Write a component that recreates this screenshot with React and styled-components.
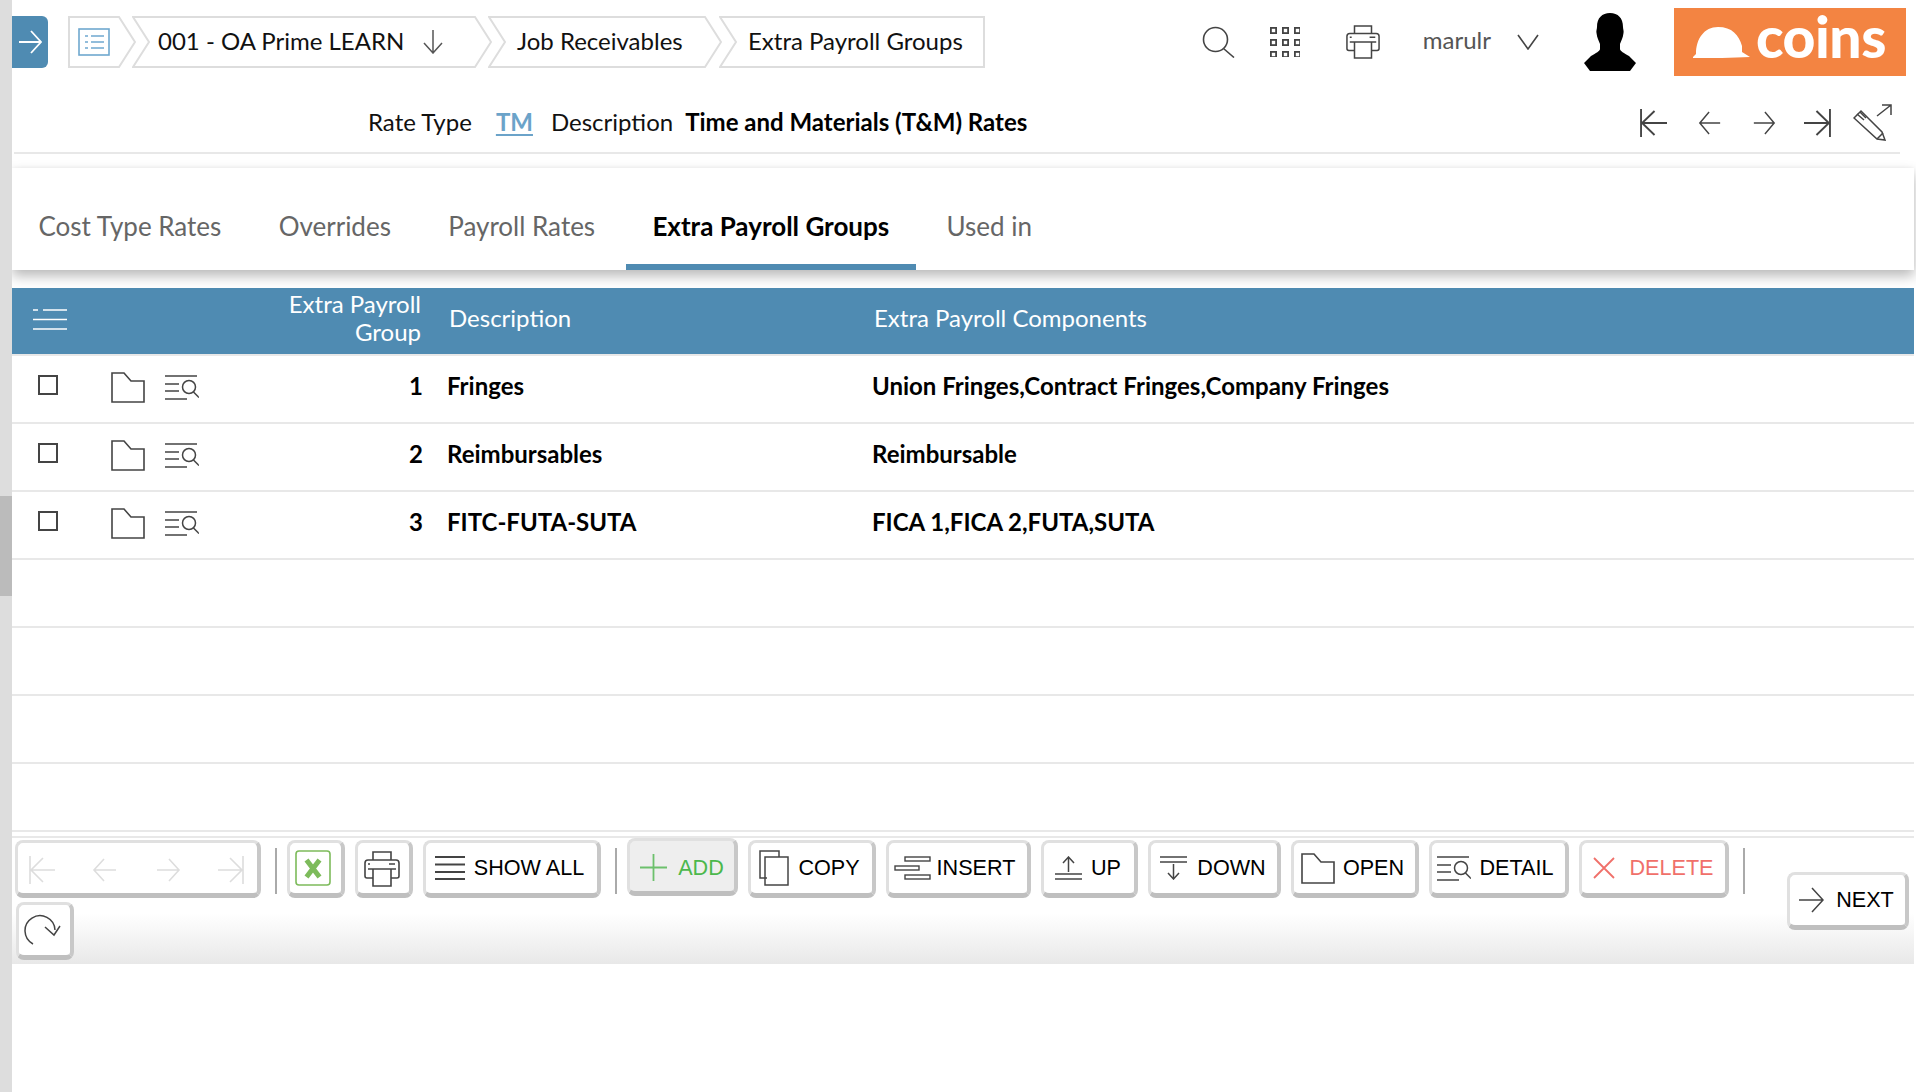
import React from "react";
import styled, { createGlobalStyle } from "styled-components";

const Global = createGlobalStyle`
  html, body { margin: 0; padding: 0; background: #fff; overflow: hidden; }
  body { font-family: Lato, "Noto Sans", sans-serif; color: #000; }
  * { box-sizing: border-box; }
`;

const Page = styled.div`display: flex; width: 1916px; height: 1092px; background: #fff;`;
const Rail = styled.div`
  position: relative; z-index: 2; width: 12px; flex: none; background: #ddd;
  &::after { content: ""; position: absolute; left: 0; top: 496px; width: 12px; height: 100px; background: #bbb; }
`;
const Main = styled.div`flex: 1; min-width: 0; display: flex; flex-direction: column;`;

const TopBar = styled.header`display: flex; align-items: center; height: 84px; padding-right: 10px;`;
const MenuButton = styled.button`
  width: 36px; height: 52px; border: 0; padding: 0; background: #4f8bb2; border-radius: 0 6px 6px 0;
  display: flex; align-items: center; justify-content: center; margin-right: 20px;
`;
const Crumbs = styled.nav`display: flex; align-items: center;`;
const CrumbBox = styled.div`
  position: relative; height: 52px; width: ${p => p.$w}px; margin-left: ${p => p.$ml}px;
  padding-left: ${p => p.$pl}px; padding-bottom: 3px; display: flex; align-items: center; gap: 18px;
  font-size: 24px; color: #111; white-space: nowrap;
  & > span, & > svg.ic { position: relative; }
  & > svg.ic { top: 1px; }
`;
const CrumbOutline = styled.svg`position: absolute; left: 0; top: 0;`;
const TopTools = styled.div`display: flex; align-items: center; margin-left: auto;`;
const User = styled.span`font-size: 24px; color: #555; margin-left: 43px; margin-right: 26px; position: relative; top: -3px;`;
const Logo = styled.div`
  width: 232px; height: 68px; background: #f38442; margin-left: 38px; padding-left: 18px;
  display: flex; align-items: center; gap: 6px; color: #fff; font-size: 57px; font-weight: 900; line-height: 1;
  span { position: relative; top: -6px; letter-spacing: -0.5px; }
`;
const ToolIcon = styled.span`display: flex; margin-left: ${p => p.$ml || 0}px;`;

const InfoRow = styled.div`
  display: flex; align-items: center; height: 70px; padding: 6px 8px 0 354px; margin: 0 16px 0 2px;
  border-bottom: 2px solid #e8e8e8; font-size: 24px; color: #111;
`;
const InfoLink = styled.span`color: #6ba3c9; font-weight: 700; text-decoration: underline; text-underline-offset: 3px; margin-left: 24px; margin-right: 18px;`;
const InfoValue = styled.span`font-weight: 700; color: #000; margin-left: 12px;`;
const RecNav = styled.div`display: flex; align-items: center; margin-left: auto; padding-top: 3px;`;
const RecIcon = styled.span`display: flex; margin-left: ${p => p.$ml}px;`;

const Tabs = styled.div`
  display: flex; height: 102px; margin: 14px 2px 0 0; background: #fff; gap: 4.3px;
  box-shadow: 0 6px 12px rgba(0,0,0,.28), 0 -1px 3px rgba(0,0,0,.03); position: relative;
`;
const Tab = styled.div`
  display: flex; align-items: center; padding: 19px 26.5px 0;
  font-size: 26px; font-weight: ${p => (p.$active ? 700 : 400)}; color: ${p => (p.$active ? "#000" : "#666")};
  border-bottom: 6px solid ${p => (p.$active ? "#4f8bb2" : "transparent")};
`;

const Cols = "188px 234px 425px 1fr";
const Table = styled.div`margin: 18px 2px 0 0;`;
const HeadRow = styled.div`
  display: grid; grid-template-columns: ${Cols}; align-items: center; height: 68px;
  background: #4f8bb2; border-bottom: 2px solid #e8e8e8; color: #fff; font-size: 24px; line-height: 28px;
`;
const HeadMenu = styled.div`display: flex; padding: 0 0 4px 21px;`;
const HeadNum = styled.div`text-align: right; padding: 0 13px 6px 0;`;
const HeadText = styled.div`padding-left: 15px; padding-bottom: 6px;`;
const Row = styled.div`
  display: grid; grid-template-columns: ${Cols}; align-items: center; height: 68px; padding-bottom: 8px;
  border-bottom: 2px solid #e8e8e8; font-size: 24px; font-weight: 700; color: #000;
`;
const RowTools = styled.div`display: flex; align-items: center; padding-left: 26px; position: relative; top: 1px;`;
const Check = styled.span`width: 20px; height: 20px; border: 2px solid #444; flex: none; margin-right: 53px; position: relative; top: -1px;`;
const RowIcon = styled.span`display: flex; margin-right: 20px; position: relative; top: 1px;`;
const Num = styled.div`text-align: right; padding-right: 11px;`;
const Cell = styled.div`padding-left: 13px; white-space: nowrap;`;

const Footer = styled.footer`
  display: flex; height: 128px; margin-top: 4px; margin-right: 2px; border-top: 2px solid #e8e8e8;
  background: linear-gradient(#fff 0, #fff 60%, #e8e8e8 100%);
`;
const Buttons = styled.div`
  flex: 1; display: flex; flex-wrap: wrap; align-content: flex-start; gap: 4px 10px; padding: 2px 0 0 3px;
`;
const Btn = styled.div`
  width: ${p => p.$w}px; height: 58px; flex: none; display: flex; align-items: center; justify-content: center;
  gap: ${p => p.$gap ?? 9}px; padding: ${p => p.$pad || "0 4px 0 0"};
  border: 3px solid #e0e0e0; border-bottom: 5px solid #bfbfbf; border-right-width: 4px; border-right-color: #c8c8c8; border-radius: 8px;
  background: ${p => (p.$pressed ? "#eee" : "#fff")};
  transform: ${p => (p.$pressed ? "translateY(-2px)" : "none")};
  font: 21.6px "Liberation Sans", Arial, sans-serif; color: ${p => p.$color || "#000"};
  white-space: nowrap;
`;
const PagerBtn = styled(Btn)`justify-content: flex-start; padding: 3px 0 0 11px; gap: 37px;`;
const RefreshBtn = styled(Btn)`margin-left: 1px;`;
const Sep = styled.span`width: 2px; height: 46px; margin: 8px 0 0 4px; background: #aaa; flex: none;`;
const NextWrap = styled.div`display: flex; align-items: center; padding-right: 5px;`;

const S = ({ w, h, vw, vh, color = "#444", sw = 1.6, children, ...rest }) => (
  <svg width={w} height={h} viewBox={`0 0 ${vw ?? w} ${vh ?? h}`} fill="none" stroke={color} strokeWidth={sw} {...rest}>{children}</svg>
);

const arrows = {
  first: "M1 0V28M26 14H2M14 2L2 14L14 26",
  prev: "M24 14H2M12 3L2 14L12 25",
  next: "M2 14H24M14 3L24 14L14 25",
  last: "M25 0V28M0 14H24M12 2L24 14L12 26",
};
const Arrow = ({ d, color, w = 26, sw = 1.6 }) => (
  <S w={w} h={28} vw={26} vh={28} color={color} sw={sw} preserveAspectRatio="none"><path d={arrows[d]} /></S>
);

const Folder = ({ w = 34, h = 31 }) => (
  <S w={w} h={h} vw={34} vh={31} sw={1.6}><path d="M1 1H13L20 9H33V30H1Z" /></S>
);
const Detail = ({ w = 34, h = 25 }) => (
  <S w={w} h={h} vw={34} vh={25} sw={1.5}>
    <path d="M0 1H32M0 9H14M0 16H14M0 24H22" />
    <circle cx="24" cy="12" r="6.5" />
    <path d="M28.5 17L34 22.5" />
  </S>
);
const Printer = ({ w = 36, h = 36 }) => (
  <S w={w} h={h} vw={36} vh={36} sw={1.6}>
    <path d="M9 9V1H27V9" />
    <path d="M9 27H3Q1 27 1 25V12Q1 9 4 9H32Q35 9 35 12V25Q35 27 33 27H27" />
    <path d="M4 18H32M9 18V35H27V18" />
    <path d="M4 13H6M25 13H31" />
  </S>
);
const Lines = () => (
  <S w={30} h={24} sw={2}><path d="M0 1H30M0 8.5H30M0 16H30M0 23H30" /></S>
);

const Crumb = ({ w, ml = 0, pl, first, last, children }) => {
  const d = 16, h = 52, t = 1, b = h - 1;
  const pts = [
    `1,${t}`,
    last ? `${w - 1},${t}` : `${w - d - 1},${t}`,
    ...(last ? [] : [`${w - 1},${h / 2}`]),
    last ? `${w - 1},${b}` : `${w - d - 1},${b}`,
    `1,${b}`,
    ...(first ? [] : [`${d + 1},${h / 2}`]),
  ].join(" ");
  return (
    <CrumbBox $w={w} $ml={ml} $pl={pl}>
      <CrumbOutline width={w} height={h}><polygon points={pts} fill="#fff" stroke="#ddd" strokeWidth="2" /></CrumbOutline>
      {children}
    </CrumbBox>
  );
};

const rows = [
  ["1", "Fringes", "Union Fringes,Contract Fringes,Company Fringes"],
  ["2", "Reimbursables", "Reimbursable"],
  ["3", "FITC-FUTA-SUTA", "FICA 1,FICA 2,FUTA,SUTA"],
  [], [], [], [],
];

export default function App() {
  return (
    <>
      <Global />
      <Page>
        <Rail />
        <Main>
          <TopBar>
            <MenuButton aria-label="menu">
              <S w={24} h={28} color="#fff" sw={1.8}><path d="M1 14H23M13 3L23 14L13 25" /></S>
            </MenuButton>
            <Crumbs>
              <Crumb w={68} pl={10} first>
                <S className="ic" w={32} h={28} color="#6fa8cf" sw={1.6}>
                  <rect x="1" y="1" width="30" height="26" />
                  <path d="M7 8H10M13 8H26M7 14H10M13 14H26M7 20H10M13 20H26" />
                </S>
              </Crumb>
              <Crumb w={360} ml={-4} pl={26}>
                <span>001 - OA Prime LEARN</span>
                <S className="ic" w={22} h={24} color="#555" sw={1.5}><path d="M11 0V23M2 13L11 23L20 13" /></S>
              </Crumb>
              <Crumb w={234} ml={-4} pl={29}><span>Job Receivables</span></Crumb>
              <Crumb w={266} ml={-3} pl={29} last><span>Extra Payroll Groups</span></Crumb>
            </Crumbs>
            <TopTools>
              <ToolIcon>
                <S w={33} h={32} sw={1.6}><circle cx="13.5" cy="13.5" r="12" /><path d="M21.5 22.5L32 31.5" /></S>
              </ToolIcon>
              <ToolIcon $ml={35}>
                <S w={30} h={30} sw={1.8}>
                  {[0, 12, 24].map(y => [0, 12, 24].map(x => <rect key={`${x}-${y}`} x={x + .9} y={y + .9} width="5.2" height="5.2" />))}
                </S>
              </ToolIcon>
              <ToolIcon $ml={46}><Printer w={34} h={34} /></ToolIcon>
              <User>marulr</User>
              <ToolIcon>
                <S w={22} h={16} sw={1.6}><path d="M1 1L11 15L21 1" /></S>
              </ToolIcon>
              <ToolIcon $ml={45}>
                <svg width="52" height="58" viewBox="0 0 52 58" fill="#000">
                  <path d="M26 0C34 0 39 5 39 14C39 16 40 18 39.5 20C39 25 37 28 36 31L36 36C36 38 40 40 45 43L52 50L46 58L6 58L0 50L7 43C12 40 16 38 16 36L16 31C15 28 13 25 12.5 20C12 18 13 16 13 14C13 5 18 0 26 0Z" />
                </svg>
              </ToolIcon>
              <Logo>
                <svg width="58" height="31" viewBox="0 0 58 31" fill="#fff">
                  <path d="M1 30C2 29 3 28 4 27C4 12 12 0 26 0C40 0 47 8 50 19L50 25L58 30C40 31 20 31 1 31Z" />
                </svg>
                <span>coins</span>
              </Logo>
            </TopTools>
          </TopBar>

          <InfoRow>
            <span>Rate Type</span>
            <InfoLink>TM</InfoLink>
            <span>Description</span>
            <InfoValue>Time and Materials (T&amp;M) Rates</InfoValue>
            <RecNav>
              <RecIcon $ml={0}><Arrow d="first" w={27} sw={1.8} /></RecIcon>
              <RecIcon $ml={31}><Arrow d="prev" w={24} /></RecIcon>
              <RecIcon $ml={30}><Arrow d="next" w={24} /></RecIcon>
              <RecIcon $ml={28}><Arrow d="last" w={27} sw={1.8} /></RecIcon>
              <RecIcon $ml={22}>
                <S w={39} h={37} sw={1.5}>
                  <path d="M1 14L8 7L29 28L32 36L24 35Z" />
                  <path d="M4 10L11 16M7 8L13 14M24 35L30 29" />
                  <path d="M24 12L38 1M29 1H38V11" />
                </S>
              </RecIcon>
            </RecNav>
          </InfoRow>

          <Tabs>
            <Tab>Cost Type Rates</Tab>
            <Tab>Overrides</Tab>
            <Tab>Payroll Rates</Tab>
            <Tab $active>Extra Payroll Groups</Tab>
            <Tab>Used in</Tab>
          </Tabs>

          <Table>
            <HeadRow>
              <HeadMenu>
                <S w={34} h={21} color="#fff" sw={1.4}><path d="M0 1H5M10 1H34M0 10.5H34M0 20H34" /></S>
              </HeadMenu>
              <HeadNum>Extra Payroll<br />Group</HeadNum>
              <HeadText>Description</HeadText>
              <HeadText>Extra Payroll Components</HeadText>
            </HeadRow>
            {rows.map((r, i) => (
              <Row key={i}>
                {r.length ? (
                  <>
                    <RowTools>
                      <Check />
                      <RowIcon><Folder /></RowIcon>
                      <RowIcon><Detail /></RowIcon>
                    </RowTools>
                    <Num>{r[0]}</Num>
                    <Cell>{r[1]}</Cell>
                    <Cell>{r[2]}</Cell>
                  </>
                ) : null}
              </Row>
            ))}
          </Table>

          <Footer>
            <Buttons>
              <PagerBtn $w={246}>
                <Arrow d="first" color="#ddd" />
                <Arrow d="prev" color="#ddd" />
                <Arrow d="next" color="#ddd" />
                <Arrow d="last" color="#ddd" />
              </PagerBtn>
              <Sep />
              <Btn $w={58} $pad="0 5px 0 0">
                <S w={36} h={36} color="#7dbb5b" sw={1.6}>
                  <rect x="1" y="1" width="34" height="34" rx="3" />
                  <path d="M11.5 10L24.5 27M24.5 10L11.5 27" strokeWidth="5" />
                </S>
              </Btn>
              <Btn $w={58} $pad="2px 4px 0 0"><Printer /></Btn>
              <Btn $w={178}><Lines />SHOW ALL</Btn>
              <Sep />
              <Btn $w={111} $pressed $color="#4cb84c" $gap={11} $pad="3px 0 0">
                <S w={27} h={27} color="#6cc06c" sw={1.8}><path d="M13.5 0V27M0 13.5H27" /></S>ADD
              </Btn>
              <Btn $w={128}>
                <S w={30} h={36} sw={1.5}><path d="M8 28H1V1H20V7" /><rect x="6" y="7" width="23" height="28" /></S>COPY
              </Btn>
              <Btn $w={145} $gap={6} $pad="0 7px 0 0">
                <S w={37} h={24} sw={1.4}>
                  <rect x="11" y="1" width="25" height="4" />
                  <rect x="1" y="10" width="24" height="4" />
                  <rect x="11" y="19" width="25" height="4" />
                </S>INSERT
              </Btn>
              <Btn $w={97} $pad="0 2px 0 0">
                <S w={27} h={24} sw={1.5}><path d="M13.5 1V16M8 7L13.5 1L19 7M0 18H27M0 23H27" /></S>UP
              </Btn>
              <Btn $w={133} $gap={10} $pad="0 2px 0 0">
                <S w={27} h={24} sw={1.5}><path d="M0 1H27M0 6H27M13.5 8V23M8 17L13.5 23L19 17" /></S>DOWN
              </Btn>
              <Btn $w={128} $gap={8}><Folder />OPEN</Btn>
              <Btn $w={140} $pad="0 7px 0 0"><Detail />DETAIL</Btn>
              <Btn $w={150} $color="#f0706a" $gap={14} $pad="0">
                <S w={22} h={22} color="#f0706a" sw={1.8}><path d="M1 1L21 21M21 1L1 21" /></S>DELETE
              </Btn>
              <Sep />
              <RefreshBtn $w={58} $pad="0 4px 0 0">
                <S w={40} h={32} sw={1.5}>
                  <path d="M32 16A15 15 0 1 0 10 30" />
                  <path d="M23 14L32 22L38 13" transform="translate(-1 -1)" />
                </S>
              </RefreshBtn>
            </Buttons>
            <NextWrap>
              <Btn $w={122} $gap={12} $pad="0 2px 0 0">
                <S w={25} h={26} sw={1.5}><path d="M0 13H24M13 1L24 13L13 25" /></S>NEXT
              </Btn>
            </NextWrap>
          </Footer>
        </Main>
      </Page>
    </>
  );
}
